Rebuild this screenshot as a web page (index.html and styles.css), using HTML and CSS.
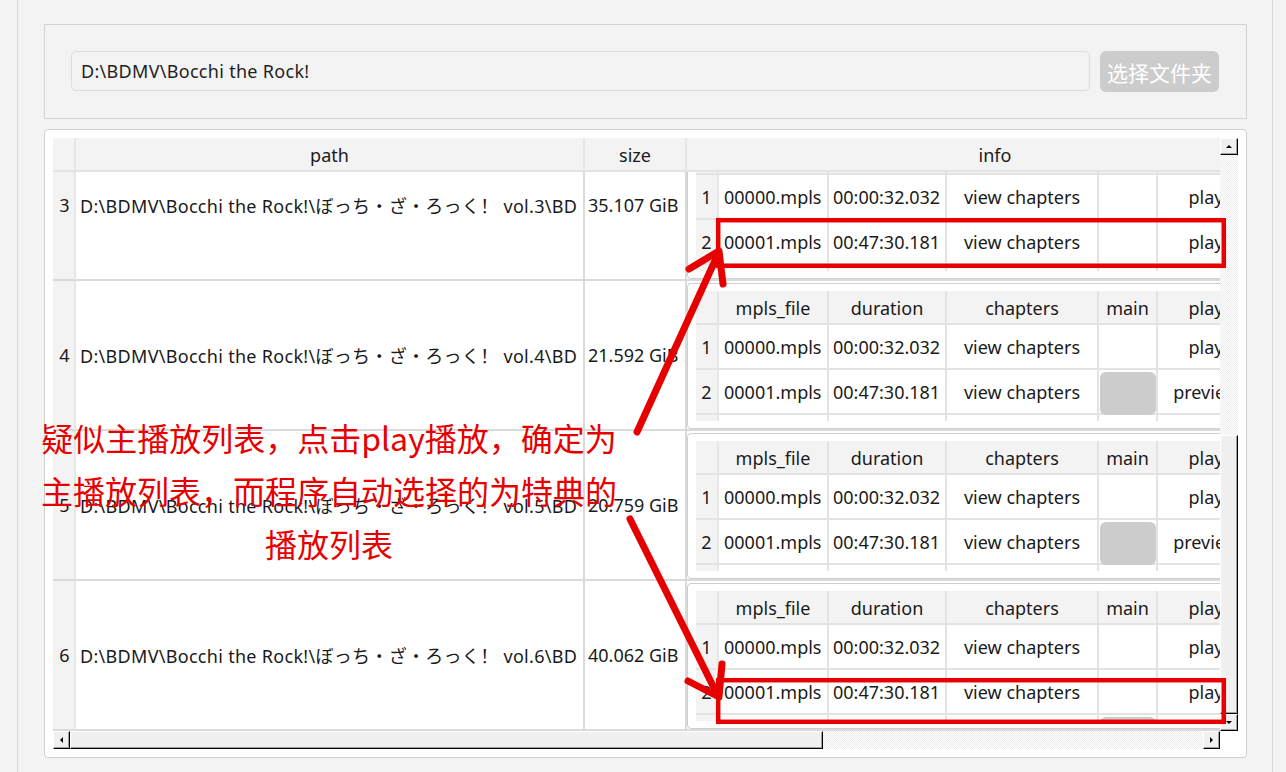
FILE: index.html
```html
<!DOCTYPE html>
<html lang="zh-CN">
<head>
<meta charset="utf-8">
<title>BDMV</title>
<link rel="stylesheet" href="styles.css">
</head>
<body>
<div class="window">
  <div class="group">
    <div class="path-input">D:\BDMV\Bocchi the Rock!</div>
    <button class="pick-btn">选择文件夹</button>
  </div>
  <div class="table-box">
    <div class="table-area">
      <div class="viewport">
        <div class="hdr">
          <div class="corner"></div>
          <div class="hsec col-path">path</div>
          <div class="hsec col-size">size</div>
          <div class="hsec col-info">info</div>
        </div>
        <div class="body">
          <!-- row 3 (partly scrolled) -->
          <div class="row first">
            <div class="vh">3</div>
            <div class="cell col-path">D:\BDMV\Bocchi the Rock!\ぼっち・ざ・ろっく！ vol.3\BD</div>
            <div class="cell col-size">35.107 GiB</div>
            <div class="cell col-info">
              <div class="nest"><div class="nview">
                <div class="nhdr"><div class="nvh"></div><div class="nh c1">mpls_file</div><div class="nh c2">duration</div><div class="nh c3">chapters</div><div class="nh c4">main</div><div class="nh c5">play</div></div>
                <div class="nrow"><div class="nvh">1</div><div class="nc c1">00000.mpls</div><div class="nc c2">00:00:32.032</div><div class="nc c3">view chapters</div><div class="nc c4"></div><div class="nc c5">play</div></div>
                <div class="nrow"><div class="nvh">2</div><div class="nc c1">00001.mpls</div><div class="nc c2">00:47:30.181</div><div class="nc c3">view chapters</div><div class="nc c4"></div><div class="nc c5">play</div></div>
                <div class="nrow"><div class="nvh"></div><div class="nc c1"></div><div class="nc c2"></div><div class="nc c3"></div><div class="nc c4"></div><div class="nc c5"></div></div>
              </div></div>
            </div>
          </div>
          <!-- row 4 -->
          <div class="row">
            <div class="vh">4</div>
            <div class="cell col-path">D:\BDMV\Bocchi the Rock!\ぼっち・ざ・ろっく！ vol.4\BD</div>
            <div class="cell col-size">21.592 GiB</div>
            <div class="cell col-info">
              <div class="nest"><div class="nview">
                <div class="nhdr"><div class="nvh"></div><div class="nh c1">mpls_file</div><div class="nh c2">duration</div><div class="nh c3">chapters</div><div class="nh c4">main</div><div class="nh c5">play</div></div>
                <div class="nrow"><div class="nvh">1</div><div class="nc c1">00000.mpls</div><div class="nc c2">00:00:32.032</div><div class="nc c3">view chapters</div><div class="nc c4"></div><div class="nc c5">play</div></div>
                <div class="nrow"><div class="nvh">2</div><div class="nc c1">00001.mpls</div><div class="nc c2">00:47:30.181</div><div class="nc c3">view chapters</div><div class="nc c4"><div class="mbtn"></div></div><div class="nc c5">preview</div></div>
                <div class="nrow"><div class="nvh"></div><div class="nc c1"></div><div class="nc c2"></div><div class="nc c3"></div><div class="nc c4"></div><div class="nc c5"></div></div>
              </div></div>
            </div>
          </div>
          <!-- row 5 -->
          <div class="row">
            <div class="vh">5</div>
            <div class="cell col-path">D:\BDMV\Bocchi the Rock!\ぼっち・ざ・ろっく！ vol.5\BD</div>
            <div class="cell col-size">20.759 GiB</div>
            <div class="cell col-info">
              <div class="nest"><div class="nview">
                <div class="nhdr"><div class="nvh"></div><div class="nh c1">mpls_file</div><div class="nh c2">duration</div><div class="nh c3">chapters</div><div class="nh c4">main</div><div class="nh c5">play</div></div>
                <div class="nrow"><div class="nvh">1</div><div class="nc c1">00000.mpls</div><div class="nc c2">00:00:32.032</div><div class="nc c3">view chapters</div><div class="nc c4"></div><div class="nc c5">play</div></div>
                <div class="nrow"><div class="nvh">2</div><div class="nc c1">00001.mpls</div><div class="nc c2">00:47:30.181</div><div class="nc c3">view chapters</div><div class="nc c4"><div class="mbtn"></div></div><div class="nc c5">preview</div></div>
                <div class="nrow"><div class="nvh"></div><div class="nc c1"></div><div class="nc c2"></div><div class="nc c3"></div><div class="nc c4"></div><div class="nc c5"></div></div>
              </div></div>
            </div>
          </div>
          <!-- row 6 -->
          <div class="row">
            <div class="vh">6</div>
            <div class="cell col-path">D:\BDMV\Bocchi the Rock!\ぼっち・ざ・ろっく！ vol.6\BD</div>
            <div class="cell col-size">40.062 GiB</div>
            <div class="cell col-info">
              <div class="nest"><div class="nview">
                <div class="nhdr"><div class="nvh"></div><div class="nh c1">mpls_file</div><div class="nh c2">duration</div><div class="nh c3">chapters</div><div class="nh c4">main</div><div class="nh c5">play</div></div>
                <div class="nrow"><div class="nvh">1</div><div class="nc c1">00000.mpls</div><div class="nc c2">00:00:32.032</div><div class="nc c3">view chapters</div><div class="nc c4"></div><div class="nc c5">play</div></div>
                <div class="nrow"><div class="nvh">2</div><div class="nc c1">00001.mpls</div><div class="nc c2">00:47:30.181</div><div class="nc c3">view chapters</div><div class="nc c4"></div><div class="nc c5">play</div></div>
                <div class="nrow"><div class="nvh"></div><div class="nc c1"></div><div class="nc c2"></div><div class="nc c3"></div><div class="nc c4"><div class="mbtn"></div></div><div class="nc c5"></div></div>
              </div></div>
            </div>
          </div>
        </div>
      </div>
      <div class="vscroll">
        <div class="bevel sb-v-btn"><span class="tri-up"></span></div>
        <div class="v-track"></div>
        <div class="bevel v-thumb"></div>
        <div class="bevel sb-v-btn"><span class="tri-down"></span></div>
      </div>
      <div class="hscroll">
        <div class="bevel sb-h-btn"><span class="tri-left"></span></div>
        <div class="bevel h-thumb"></div>
        <div class="h-track"></div>
        <div class="bevel sb-h-btn"><span class="tri-right"></span></div>
      </div>
      <div class="sc-corner"></div>
    </div>
  </div>
</div>

<div class="annot">
  <div class="note">
    <div>疑似主播放列表，点击play播放，确定为</div>
    <div>主播放列表，而程序自动选择的为特典的</div>
    <div>播放列表</div>
  </div>
  <svg class="marks" width="1286" height="772" viewBox="0 0 1286 772">
    <g fill="none" stroke="#e60000" stroke-linecap="round" stroke-linejoin="round">
      <path stroke-width="7" d="M637 432 L718 254"/>
      <path stroke-width="7" d="M689 269 L719 251 L723 284"/>
      <path stroke-width="7" d="M630 519 L717 694"/>
      <path stroke-width="7" d="M722 664 L719 697 L688 681"/>
    </g>
    <g fill="none" stroke="#e60000" stroke-width="4.5">
      <rect x="718.2" y="220.2" width="505.6" height="45.6"/>
      <rect x="718.2" y="680.2" width="505.6" height="41.6"/>
    </g>
  </svg>
</div>
</body>
</html>
```

FILE: styles.css
```css
* { box-sizing: border-box; }

html, body { margin: 0; padding: 0; }

body {
  width: 1286px;
  height: 772px;
  overflow: hidden;
  position: relative;
  background: #f3f3f3;
  font-family: "Noto Sans", "Noto Sans CJK SC", sans-serif;
  font-size: 18px;
  color: #1a1a1a;
}

.window {
  margin-left: 17px;
  width: 1256px;
  height: 772px;
  border-left: 1px solid #d9d9d9;
  border-right: 1px solid #d9d9d9;
  padding: 24px 25px 0 26px;
  display: flex;
  flex-direction: column;
  gap: 10px;
}

/* ---------- top group ---------- */
.group {
  height: 95px;
  border: 1px solid #d2d2d2;
  padding: 26px 27px 0 26px;
  display: flex;
  align-items: flex-start;
  gap: 10px;
}

.path-input {
  flex: 1;
  height: 40px;
  border: 1px solid #dcdcdc;
  border-radius: 5px;
  padding-left: 9px;
  display: flex;
  align-items: center;
  color: #1f1f1f;
  letter-spacing: 0.3px;
  white-space: nowrap;
}

.pick-btn {
  width: 119px;
  height: 41px;
  border: none;
  border-radius: 6px;
  background: #cccccc;
  color: #ffffff;
  font-family: "Noto Sans CJK SC", sans-serif;
  font-size: 21px;
  padding: 0;
}

/* ---------- table box ---------- */
.table-box {
  height: 629px;
  border: 1px solid #d0d0d0;
  border-radius: 4px;
  background: #ffffff;
  padding: 8px;
}

.table-area {
  height: 611px;
  display: grid;
  grid-template-columns: 1fr 18px;
  grid-template-rows: 1fr 18px;
}

.viewport {
  overflow: hidden;
  display: flex;
  flex-direction: column;
  min-width: 0;
}

.hdr {
  flex: none;
  height: 34px;
  display: flex;
  background: #f3f3f3;
  position: relative;
  z-index: 1;
}

.corner {
  flex: none;
  width: 23px;
  border-right: 2px solid #e6e6e6;
  border-bottom: 2px solid #e3e3e3;
}

.hsec {
  flex: none;
  display: flex;
  align-items: center;
  justify-content: center;
  padding-top: 1px;
  border-right: 2px solid #e6e6e6;
  border-bottom: 2px solid #e3e3e3;
}

.col-path { width: 509px; }
.col-size { width: 102px; }
.col-info { width: 618px; }

.body {
  flex: 1;
  overflow: hidden;
}

.row {
  display: flex;
  height: 150px;
}

.row.first { margin-top: -41px; }

.vh {
  flex: none;
  width: 23px;
  background: #f3f3f3;
  border-right: 2px solid #e6e6e6;
  border-bottom: 2px solid #dadada;
  display: flex;
  align-items: center;
  justify-content: center;
  padding-left: 2px;
}

.cell {
  flex: none;
  border-right: 2px solid #dadada;
  border-bottom: 2px solid #dadada;
  display: flex;
  align-items: center;
  padding-left: 4px;
  white-space: nowrap;
  overflow: hidden;
}

.cell.col-path { letter-spacing: 0.3px; }
.cell.col-size { padding-left: 3px; }

.cell.col-info {
  align-items: flex-start;
  padding: 2px 0 0 0;
  border-right: none;
  overflow: visible;
}

/* ---------- nested tables ---------- */
.nest {
  width: 580px;
  height: 146px;
  border: 1px solid #cfcfcf;
  border-radius: 4px;
  padding: 7px 8px;
  background: #ffffff;
}

.nview {
  height: 130px;
  overflow: hidden;
}

.nhdr {
  display: flex;
  height: 34px;
  background: #f3f3f3;
}

.nrow {
  display: flex;
  height: 45px;
}

.nvh {
  flex: none;
  width: 23px;
  background: #f3f3f3;
  border-right: 2px solid #e6e6e6;
  border-bottom: 2px solid #e3e3e3;
  display: flex;
  align-items: center;
  justify-content: center;
}

.nh, .nc {
  flex: none;
  display: flex;
  align-items: center;
  white-space: nowrap;
  overflow: hidden;
  border-right: 2px solid #e3e3e3;
  border-bottom: 2px solid #e3e3e3;
}

.nh { justify-content: center; padding-top: 1px; }

.nc { padding-left: 4px; }
.nc.c1 { padding-left: 5px; }
.nc.c3, .nc.c5 { justify-content: center; padding-left: 0; }
.nc.c4 { align-items: flex-start; padding-left: 1px; overflow: visible; }

.c1 { width: 110px; }
.c2 { width: 118px; }
.c3 { width: 152px; }
.c4 { width: 59px; }
.c5 { width: 98px; }

.mbtn {
  width: 56px;
  height: 43px;
  margin-top: 2px;
  background: #cccccc;
  border-radius: 6px;
}

/* ---------- scrollbars ---------- */
.bevel {
  background: #f0f0f0;
  border-top: 1px solid #ffffff;
  border-left: 1px solid #ffffff;
  border-right: 1px solid #000000;
  border-bottom: 1px solid #000000;
  box-shadow: inset -1px -1px 0 #a0a0a0;
  display: flex;
  align-items: center;
  justify-content: center;
}

.vscroll {
  display: flex;
  flex-direction: column;
  background: repeating-conic-gradient(#ffffff 0 25%, #ececec 0 50%) 0 0 / 2px 2px;
}

.sb-v-btn { height: 17px; flex: none; }
.v-track { height: 280px; flex: none; }
.v-thumb { flex: 1; }

.hscroll {
  display: flex;
  background: repeating-conic-gradient(#ffffff 0 25%, #ececec 0 50%) 0 0 / 2px 2px;
}

.sb-h-btn { width: 17px; flex: none; }
.h-thumb { width: 753px; flex: none; }
.h-track { flex: 1; }

.sc-corner { background: #ffffff; }

.tri-up, .tri-down, .tri-left, .tri-right { width: 0; height: 0; display: block; }
.tri-up { border-left: 3px solid transparent; border-right: 3px solid transparent; border-bottom: 3px solid #000; }
.tri-down { border-left: 3px solid transparent; border-right: 3px solid transparent; border-top: 3px solid #000; }
.tri-left { border-top: 3px solid transparent; border-bottom: 3px solid transparent; border-right: 3px solid #000; }
.tri-right { border-top: 3px solid transparent; border-bottom: 3px solid transparent; border-left: 3px solid #000; }

/* ---------- annotation overlay ---------- */
.annot {
  position: absolute;
  left: 0;
  top: 0;
  width: 1286px;
  height: 772px;
  pointer-events: none;
}

.note {
  position: absolute;
  left: 39px;
  top: 411px;
  width: 580px;
  text-align: center;
  font-family: "Noto Sans CJK SC", sans-serif;
  font-size: 32px;
  line-height: 53px;
  color: #e60000;
  white-space: nowrap;
}

.marks {
  position: absolute;
  left: 0;
  top: 0;
}
```
